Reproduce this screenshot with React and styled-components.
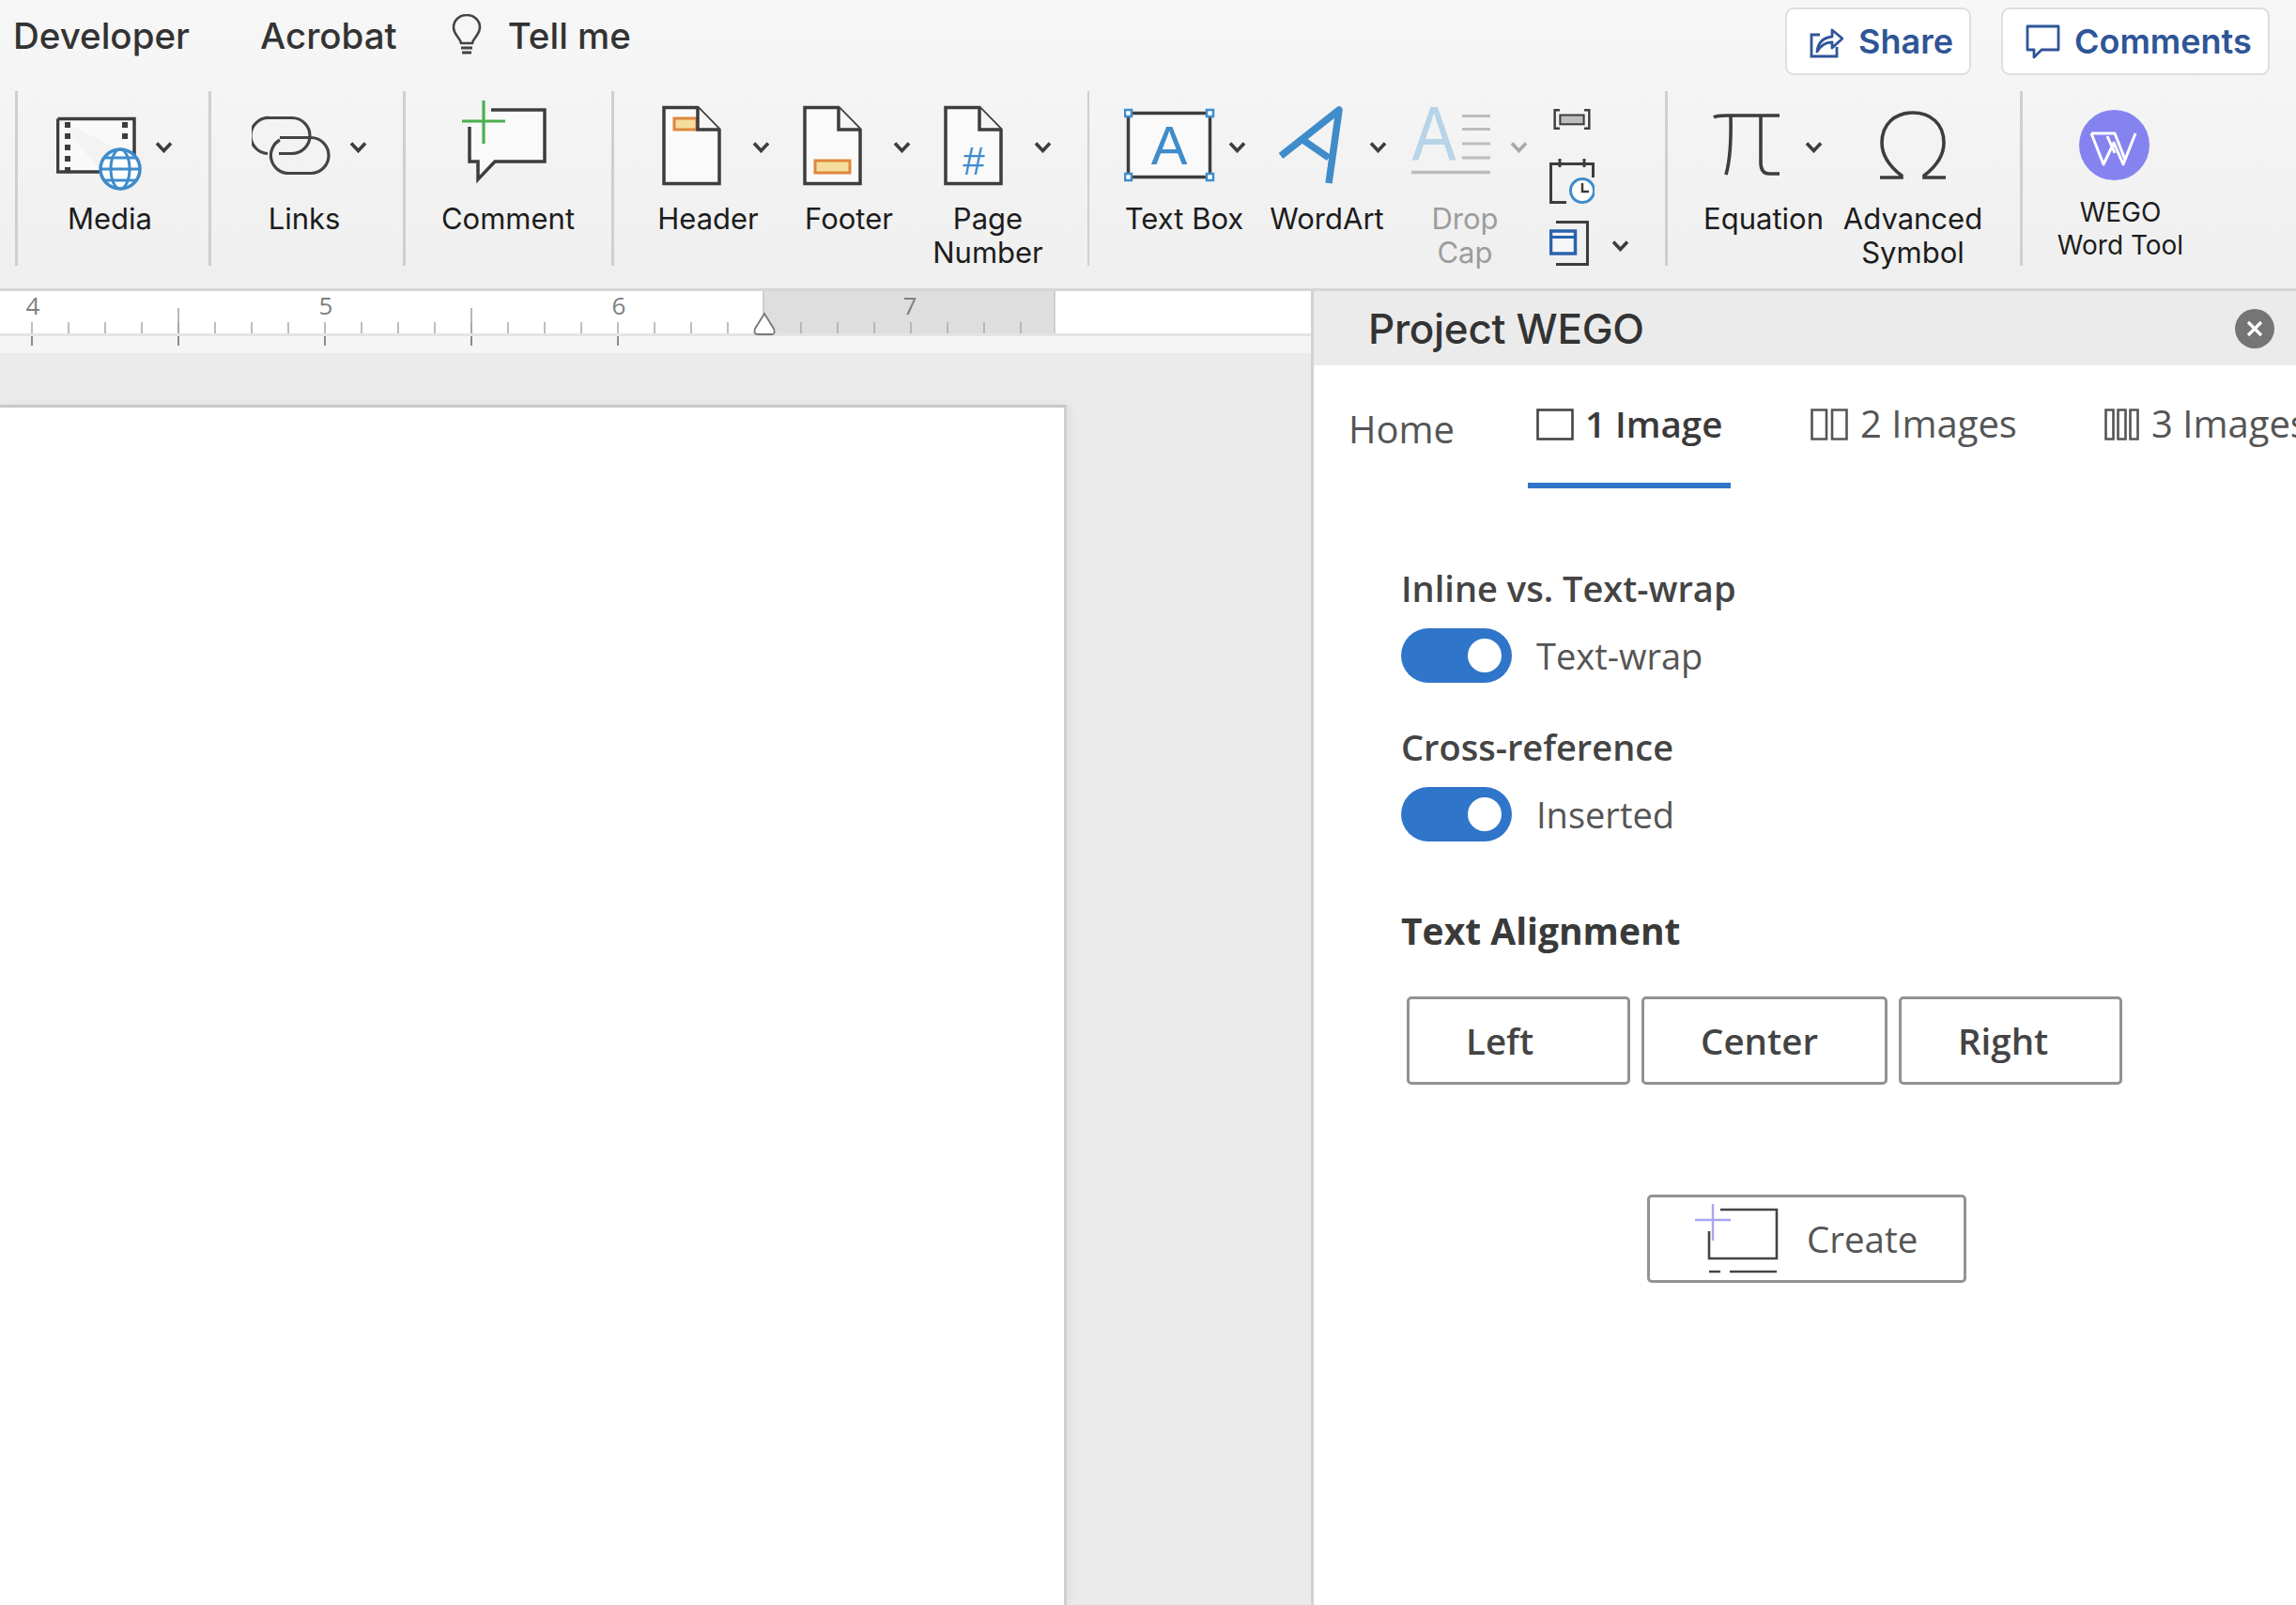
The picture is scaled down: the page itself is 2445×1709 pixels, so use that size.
import React from "react";
import styled, { createGlobalStyle } from "styled-components";

const Global = createGlobalStyle`
  html, body { margin: 0; padding: 0; background: #fff; overflow: hidden; }
  #root { width: 2445px; height: 1709px; overflow: hidden; }
  * { box-sizing: border-box; }
`;

const UI = `Inter, "Liberation Sans", sans-serif`;
const PANEL = `"Open Sans", "Noto Sans", sans-serif`;
const INK = "#3d3d3d";
const BLUE = "#3f8ccb";

const Page = styled.div`
  width: 2445px; height: 1709px; display: flex; flex-direction: column; overflow: hidden;
  font-family: ${UI};
`;
const Ribbon = styled.header`
  height: 310px; flex: none; background: linear-gradient(#f7f7f7, #efefef);
  border-bottom: 3px solid #d6d6d6; display: flex; flex-direction: column;
`;
const TopBar = styled.div`
  height: 97px; flex: none; display: flex; justify-content: space-between; align-items: flex-start;
  padding: 0 28px 0 14px;
`;
const MenuTabs = styled.nav`display: flex; align-items: center; height: 76px; color: #333;`;
const MenuTab = styled.span`
  font-size: 38.5px; font-weight: 500; margin-left: ${p => p.$ml || 0}px; white-space: nowrap;
`;
const Bulb = styled.svg`margin-left: 58px; width: 32px; height: 46px; flex: none;`;
const Actions = styled.div`display: flex; gap: 32px; margin-top: 8px;`;
const ActionBtn = styled.button`
  height: 72px; width: ${p => p.$w}px; background: #fff; border: 2.5px solid #dedede; border-radius: 9px;
  display: flex; align-items: center; gap: ${p => p.$gap}px; padding: 0 0 0 ${p => p.$pl}px;
  color: #2f5597; font: 600 36px ${UI};
`;
const Commands = styled.div`display: flex; height: 186px; padding-left: 16px;`;
const Sep = styled.div`width: 2.5px; height: 186px; flex: none; background: #cfcfcf;`;
const Group = styled.div`
  width: ${p => p.$w}px; flex: none; display: flex; padding: 8px 0 0 ${p => p.$pl}px;
`;
const Item = styled.div`width: ${p => p.$w}px; flex: none;`;
const IconRow = styled.div`display: flex; align-items: center; height: 102px;`;
const Caret = styled.svg`
  width: 19px; height: 13px; flex: none; margin-left: ${p => p.$ml}px; margin-top: ${p => p.$mt || 0}px; opacity: ${p => p.$dim ? 0.4 : 1};
`;
const Label = styled.div`
  display: inline-block; margin-left: ${p => p.$c}px; margin-top: ${p => p.$top ?? 8}px; transform: translateX(-50%);
  white-space: nowrap; text-align: center; font-size: ${p => p.$size || 31}px; line-height: ${p => p.$lh || 36}px;
  color: ${p => p.$dim ? "#9c9c9c" : "#1c1c1c"};
`;
const MiniStack = styled.div`display: flex; flex-direction: column; align-items: flex-start; padding-top: 11px;`;
const MiniRow = styled.div`display: flex; align-items: center; margin-top: ${p => p.$mt}px;`;

const Workspace = styled.main`flex: 1; display: flex; min-height: 0;`;
const DocArea = styled.section`width: 1396px; flex: none; background: #ebebeb; display: flex; flex-direction: column;`;
const RulerSvg = styled.svg`display: block; width: 1396px; height: 66px; flex: none;`;
const DocPage = styled.div`
  width: 1136px; flex: 1; margin-top: 55px; background: #fff; border-top: 3px solid #c9c9c9; border-right: 3px solid #cfcfcf;
  box-shadow: 4px 0 10px rgba(0,0,0,.05);
`;
const Panel = styled.aside`
  flex: 1; min-width: 0; background: #fff; border-left: 3px solid #d2d2d2; display: flex; flex-direction: column;
  font-family: ${PANEL};
`;
const PanelHead = styled.div`
  height: 79px; flex: none; background: #ebebeb; display: flex; align-items: center; justify-content: space-between;
  padding: 0 23px 0 58px;
`;
const PanelTitle = styled.h1`margin: 0; font: 500 44px ${UI}; color: #333; letter-spacing: -0.3px;`;
const CloseBtn = styled.button`
  width: 42px; height: 42px; border-radius: 50%; border: 0; padding: 0; background: #757575; display: flex; align-items: center; justify-content: center;
`;
const TabBar = styled.div`height: 131px; flex: none; display: flex; padding-left: 37px; overflow: hidden;`;
const Tab = styled.div`
  flex: none; height: 131px; width: ${p => p.$w}px; padding: ${p => p.$pt || 37}px 0 0 ${p => p.$pl || 0}px;
  display: flex; align-items: flex-start; gap: ${p => p.$active ? 12 : 13}px; white-space: nowrap;
  font-size: ${p => p.$active ? 38.5 : 40}px; line-height: 50px; color: ${p => p.$active ? "#3a3a3a" : "#555"}; font-weight: ${p => p.$active ? 600 : 400};
  border-bottom: 6px solid ${p => p.$active ? "#2f75c9" : "transparent"};
`;
const TabIcon = styled.svg`flex: none; height: 34px; margin-top: 9px;`;
const Body = styled.div`padding: 84px 0 0 93px; display: flex; flex-direction: column; align-items: flex-start;`;
const FieldTitle = styled.div`
  font-size: ${p => p.$bold ? 39 : 38}px; line-height: 44px; color: ${p => p.$bold ? "#3a3a3a" : "#444"}; font-weight: ${p => p.$bold ? 700 : 600}; margin-top: ${p => p.$mt || 0}px;
`;
const ToggleRow = styled.div`display: flex; align-items: center; gap: 26px; margin-top: ${p => p.$mt}px;`;
const Toggle = styled.div`
  width: 118px; height: 58px; border-radius: 29px; background: #2f75c9; display: flex; align-items: center; justify-content: flex-end; padding-right: 11px;
`;
const Knob = styled.div`width: 36px; height: 36px; border-radius: 50%; background: #fff;`;
const ToggleText = styled.span`font-size: 38px; color: #555;`;
const AlignRow = styled.div`display: flex; gap: 12px; margin: 48px 0 0 6px;`;
const AlignBtn = styled.button`
  width: ${p => p.$w}px; height: 94px; background: #fff; border: 3px solid #929292; border-radius: 5px; padding: 0 0 0 60px;
  text-align: left; font: 600 38.5px ${PANEL}; color: #444;
`;
const CreateBtn = styled.button`
  width: 340px; height: 94px; margin: 117px 0 0 262px; background: #fff; border: 3px solid #929292; border-radius: 5px;
  display: flex; align-items: center; padding: 0 0 0 45px; gap: 30px; font: 400 38.5px ${PANEL}; color: #555;
`;
const CreateIcon = styled.svg`width: 92px; height: 88px; flex: none;`;

const I = ({ w, children }) => (
  <svg width={w} height={102} viewBox={`0 0 ${w} 102`} fill="none" style={{ flex: "none", display: "block" }}>{children}</svg>
);
const Chevron = ({ ml, dim, mt }) => (
  <Caret $ml={ml} $dim={dim} $mt={mt} viewBox="0 0 19 13" fill="none"><path d="M2 2.5 L9.5 10.5 L17 2.5" stroke={INK} strokeWidth="3.6" /></Caret>
);

const MediaIcon = () => (
  <I w={92}>
    <path d="M1.5 21.5H83V62M48 78H1.5V21.5" stroke={INK} strokeWidth="3.5" fill="#f9f9f9" />
    {[26, 38, 50, 62, 74].map(y => <rect key={y} x="9" y={y - 1} width="6" height="6" fill={INK} />)}
    {[26, 38].map(y => <rect key={y} x="70" y={y - 1} width="6" height="6" fill={INK} />)}
    <circle cx="68" cy="75" r="21" fill="#fff" stroke={BLUE} strokeWidth="3.5" />
    <ellipse cx="68" cy="75" rx="10" ry="21" stroke={BLUE} strokeWidth="3" />
    <path d="M47 75H89M51 63H85M51 87H85" stroke={BLUE} strokeWidth="3" />
  </I>
);
const LinksIcon = () => (
  <I w={84}>
    <path d="M17 58.5A19 19 0 0 1 19 20.5H43A19 19 0 0 1 43 58.5H29" stroke="#444" strokeWidth="3.2" />
    <path d="M30 41.5H63A19 19 0 0 1 63 79.5H40A19 19 0 0 1 30 44" stroke="#444" strokeWidth="3.2" />
  </I>
);
const CommentIcon = () => (
  <I w={92}>
    <path d="M31 12H88V67H35L17 86V67H8V30" fill="#fafafa" stroke={INK} strokeWidth="3.5" />
    <path d="M0 24H46M23 2V48" stroke="#4caf50" strokeWidth="3.2" />
  </I>
);
const DocIcon = ({ children }) => (
  <I w={63}>
    <path d="M2 9.5H38L61 33V90.5H2Z" fill="#fafafa" stroke={INK} strokeWidth="3.5" />
    {children}
    <path d="M38 9.5V33H61" fill="#f6f6f6" stroke={INK} strokeWidth="3.5" />
  </I>
);
const TextBoxIcon = () => (
  <I w={97}>
    <rect x="4.5" y="15.5" width="87" height="68" fill="#fafafa" stroke={INK} strokeWidth="3.5" />
    {[[4.5, 15.5], [91.5, 15.5], [4.5, 83.5], [91.5, 83.5]].map(([x, y]) => (
      <rect key={x + "-" + y} x={x - 3.5} y={y - 3.5} width="7" height="7" fill="#fff" stroke={BLUE} strokeWidth="2.5" />
    ))}
    <text x="48" y="70" textAnchor="middle" fontFamily="'Liberation Sans', sans-serif" fontSize="58" fill={BLUE}>A</text>
  </I>
);
const WordArtIcon = () => (
  <I w={70}>
    <path d="M3 61L65 12L54 90M25 43L54 63" stroke={BLUE} strokeWidth="7.5" strokeLinejoin="round" />
  </I>
);
const DropCapIcon = () => (
  <I w={84}>
    <text x="0" y="0" transform="translate(24 65) scale(.87 1)" textAnchor="middle" fontFamily="'Liberation Sans', sans-serif" fontSize="81" fill="#b7d4e9">A</text>
    <path d="M54 18.5H84M54 32.5H84M54 48H84M54 63H84" stroke="#bcbcbc" strokeWidth="3" />
    <path d="M0 78.5H84" stroke="#bcbcbc" strokeWidth="3.5" />
  </I>
);
const PiIcon = () => (
  <I w={72}>
    <path d="M1 20Q4 18 14 18H71M19 18Q20 60 14 81M51 18V68Q51 80 60 80H71" stroke={INK} strokeWidth="3.6" />
  </I>
);
const OmegaIcon = () => (
  <I w={70}>
    <path d="M0 84H23V82C10 72 2 60 2 47C2 27 16 15 35 15C54 15 68 27 68 47C68 60 60 72 47 82V84H70" stroke={INK} strokeWidth="3.6" />
  </I>
);
const WegoIcon = () => (
  <I w={76}>
    <circle cx="37.5" cy="49.5" r="37.5" fill="#8583f0" />
    <path d="M13 37H38L49 65L60 37M13 37L26 70L37 47L47 70L60 37M30 40L38 58" stroke="#fff" strokeWidth="3" strokeLinejoin="round" />
  </I>
);
const SlideIcon = () => (
  <svg width="48" height="27" viewBox="0 0 48 27" fill="none" style={{ display: "block" }}>
    <path d="M8 1.5H1.5V25.5H8M40 1.5H46.5V25.5H40" stroke={INK} strokeWidth="3" />
    <rect x="8.5" y="8" width="31" height="12" fill="#bdbdbd" stroke={INK} strokeWidth="2.5" />
  </svg>
);
const CalendarIcon = () => (
  <svg width="48" height="48" viewBox="0 0 48 48" fill="none" style={{ display: "block" }}>
    <path d="M18 46.5H1.5V5.5H46.5V20" stroke={INK} strokeWidth="3" />
    <path d="M11 0V9M37 0V9" stroke={INK} strokeWidth="3" />
    <circle cx="35" cy="34" r="12.5" fill="#fff" stroke={BLUE} strokeWidth="3" />
    <path d="M35 26V35H42" stroke={INK} strokeWidth="2.5" />
  </svg>
);
const WindowIcon = () => (
  <svg width="42" height="48" viewBox="0 0 42 48" fill="none" style={{ display: "block" }}>
    <path d="M7 1.5H40.5V46.5H7" stroke={INK} strokeWidth="3" />
    <rect x="1.5" y="11" width="26" height="24" fill="#f6f6f6" stroke="#2a62ae" strokeWidth="3.5" />
    <path d="M2 17.5H27" stroke="#2a62ae" strokeWidth="3" />
  </svg>
);

const Ruler = () => {
  const small = [];
  for (let i = 0; i < 29; i++) small.push(-5 + i * 39);
  return (
    <RulerSvg viewBox="0 0 1396 66">
      <rect x="0" y="0" width="1396" height="45" fill="#fff" />
      <rect x="813" y="0" width="310" height="45" fill="#dedede" />
      <path d="M813 0V45M1123 0V45" stroke="#c4c4c4" strokeWidth="1.5" />
      <rect x="0" y="45" width="1396" height="3" fill="#e4e4e4" />
      <rect x="0" y="48" width="1396" height="18" fill="#f5f5f5" />
      {small.map(x => <path key={x} d={`M${x} 33V45`} stroke="#a8a8a8" strokeWidth="1.5" />)}
      {[190, 502].map(x => <path key={x} d={`M${x} 18V45`} stroke="#a0a0a0" strokeWidth="1.5" />)}
      {[34, 190, 346, 502, 658].map(x => <path key={x} d={`M${x} 48V58`} stroke="#8a8a8a" strokeWidth="2" />)}
      {[[35, "4"], [347, "5"], [659, "6"], [969, "7"]].map(([x, t]) => (
        <text key={t} x={x} y="25" textAnchor="middle" fontFamily="'Open Sans', sans-serif" fontSize="26" fill="#808080">{t}</text>
      ))}
      <path d="M814 24L804 40Q802 46 807 46H822Q826 46 824 40Z" fill="#fff" stroke="#777" strokeWidth="1.8" />
    </RulerSvg>
  );
};

const Item1 = ({ w, c, Icon, text, ml, dim }) => (
  <Item $w={w}>
    <IconRow><Icon />{ml !== undefined && <Chevron ml={ml} dim={dim} />}</IconRow>
    <Label $c={c} $dim={dim}>{text}</Label>
  </Item>
);

const HeaderIcon = () => (
  <DocIcon><rect x="13" y="21" width="24" height="12" fill="#f5dd9b" stroke="#e0873c" strokeWidth="3" /></DocIcon>
);
const FooterIcon = () => (
  <DocIcon><rect x="13" y="66" width="37" height="13" fill="#f5dd9b" stroke="#e0873c" strokeWidth="3" /></DocIcon>
);
const PageNumberIcon = () => (
  <DocIcon><text x="32" y="81" textAnchor="middle" fontFamily="'Liberation Sans', sans-serif" fontSize="42" fill={BLUE}>#</text></DocIcon>
);

export default function App() {
  return (
    <Page>
      <Global />
      <Ribbon>
        <TopBar>
          <MenuTabs>
            <MenuTab>Developer</MenuTab>
            <MenuTab $ml={75}>Acrobat</MenuTab>
            <Bulb viewBox="0 0 32 46" fill="none">
              <path d="M10 31C9 25 2 22 2 14A14 13 0 0 1 30 14C30 22 23 25 22 31Z" stroke="#444" strokeWidth="2.6" />
              <path d="M10 36H22M11 41H21" stroke="#444" strokeWidth="2.8" />
            </Bulb>
            <MenuTab $ml={28}>Tell me</MenuTab>
          </MenuTabs>
          <Actions>
            <ActionBtn $w={198} $gap={16} $pl={24}>
              <svg width="36" height="36" viewBox="0 0 36 36" fill="none" style={{ flex: "none" }}>
                <path d="M11 11H2V34H29V24" stroke="#2f5597" strokeWidth="2.8" />
                <path d="M8 29C9 19 15 14 24 13V6L35 15L24 25V19C17 19 12 22 8 29Z" stroke="#2f5597" strokeWidth="2.8" strokeLinejoin="round" />
              </svg>
              Share
            </ActionBtn>
            <ActionBtn $w={286} $gap={15} $pl={24}>
              <svg width="37" height="37" viewBox="0 0 37 37" fill="none" style={{ flex: "none" }}>
                <path d="M2 2H35V27H17L9 35V27H2Z" stroke="#2f5597" strokeWidth="2.8" strokeLinejoin="round" />
              </svg>
              Comments
            </ActionBtn>
          </Actions>
        </TopBar>
        <Commands>
          <Sep />
          <Group $w={203.5} $pl={41}><Item1 w={150} c={57.5} Icon={MediaIcon} text="Media" ml={13} /></Group>
          <Sep />
          <Group $w={204.5} $pl={43.5}><Item1 w={150} c={56} Icon={LinksIcon} text="Links" ml={20} /></Group>
          <Sep />
          <Group $w={219.5} $pl={60.5}><Item1 w={150} c={49} Icon={CommentIcon} text="Comment" /></Group>
          <Sep />
          <Group $w={504} $pl={51.5}>
            <Item1 w={150} c={49} ml={33} text="Header" Icon={HeaderIcon} />
            <Item1 w={150} c={49} ml={33} text="Footer" Icon={FooterIcon} />
            <Item1 w={154} c={47} ml={33} text={<>Page<br />Number</>} Icon={PageNumberIcon} />
          </Group>
          <Sep />
          <Group $w={613} $pl={37}>
            <Item1 w={164} c={64} ml={14} text="Text Box" Icon={TextBoxIcon} />
            <Item1 w={142} c={52} ml={27} text="WordArt" Icon={WordArtIcon} />
            <Item1 w={147} c={57} ml={21} dim text={<>Drop<br />Cap</>} Icon={DropCapIcon} />
            <MiniStack>
              <SlideIcon />
              <MiniRow $mt={31}><CalendarIcon /></MiniRow>
              <MiniRow $mt={18}><WindowIcon /><Chevron ml={24} mt={4} /></MiniRow>
            </MiniStack>
          </Group>
          <Sep />
          <Group $w={375.5} $pl={48.5}>
            <Item1 w={178} c={54} ml={26} text="Equation" Icon={PiIcon} />
            <Item1 w={120} c={35} text={<>Advanced<br />Symbol</>} Icon={OmegaIcon} />
          </Group>
          <Sep />
          <Group $w={280} $pl={60.5}>
            <Item $w={150}>
              <IconRow><WegoIcon /></IconRow>
              <Label $c={44} $top={2} $size={28} $lh={35}>WEGO<br />Word Tool</Label>
            </Item>
          </Group>
        </Commands>
      </Ribbon>
      <Workspace>
        <DocArea>
          <Ruler />
          <DocPage />
        </DocArea>
        <Panel>
          <PanelHead>
            <PanelTitle>Project WEGO</PanelTitle>
            <CloseBtn aria-label="Close">
              <svg width="20" height="20" viewBox="0 0 20 20"><path d="M3 3L17 17M17 3L3 17" stroke="#fff" strokeWidth="3.2" /></svg>
            </CloseBtn>
          </PanelHead>
          <TabBar>
            <Tab $w={191} $pt={43}>Home</Tab>
            <Tab $w={216} $pl={9} $active>
              <TabIcon viewBox="0 0 40 34" width="40" fill="none"><rect x="1.5" y="1.5" width="37" height="31" stroke="#444" strokeWidth="2.6" /></TabIcon>
              1 Image
            </Tab>
            <Tab $w={398} $pl={85}>
              <TabIcon viewBox="0 0 40 34" width="40" fill="none"><path d="M1.5 1.5H17V32.5H1.5ZM23 1.5H38.5V32.5H23Z" stroke="#555" strokeWidth="2.6" /></TabIcon>
              2 Images
            </Tab>
            <Tab $w={400}>
              <TabIcon viewBox="0 0 37 34" width="37" fill="none"><path d="M1.5 1.5H9.5V32.5H1.5ZM14.5 1.5H22.5V32.5H14.5ZM27.5 1.5H35.5V32.5H27.5Z" stroke="#555" strokeWidth="2.6" /></TabIcon>
              3 Images
            </Tab>
          </TabBar>
          <Body>
            <FieldTitle>Inline vs. Text-wrap</FieldTitle>
            <ToggleRow $mt={21}><Toggle><Knob /></Toggle><ToggleText>Text-wrap</ToggleText></ToggleRow>
            <FieldTitle $mt={46}>Cross-reference</FieldTitle>
            <ToggleRow $mt={21}><Toggle><Knob /></Toggle><ToggleText>Inserted</ToggleText></ToggleRow>
            <FieldTitle $mt={73} $bold>Text Alignment</FieldTitle>
            <AlignRow>
              <AlignBtn $w={238}>Left</AlignBtn>
              <AlignBtn $w={262}>Center</AlignBtn>
              <AlignBtn $w={238}>Right</AlignBtn>
            </AlignRow>
            <CreateBtn>
              <CreateIcon viewBox="0 0 92 88" fill="none">
                <path d="M18 36V65H90V13H30" stroke="#444" strokeWidth="2.6" />
                <path d="M3 24H41M22 7V46" stroke="#a9a5f2" strokeWidth="2.4" />
                <path d="M18 79H30M40 79H90" stroke="#444" strokeWidth="2.6" />
              </CreateIcon>
              Create
            </CreateBtn>
          </Body>
        </Panel>
      </Workspace>
    </Page>
  );
}
